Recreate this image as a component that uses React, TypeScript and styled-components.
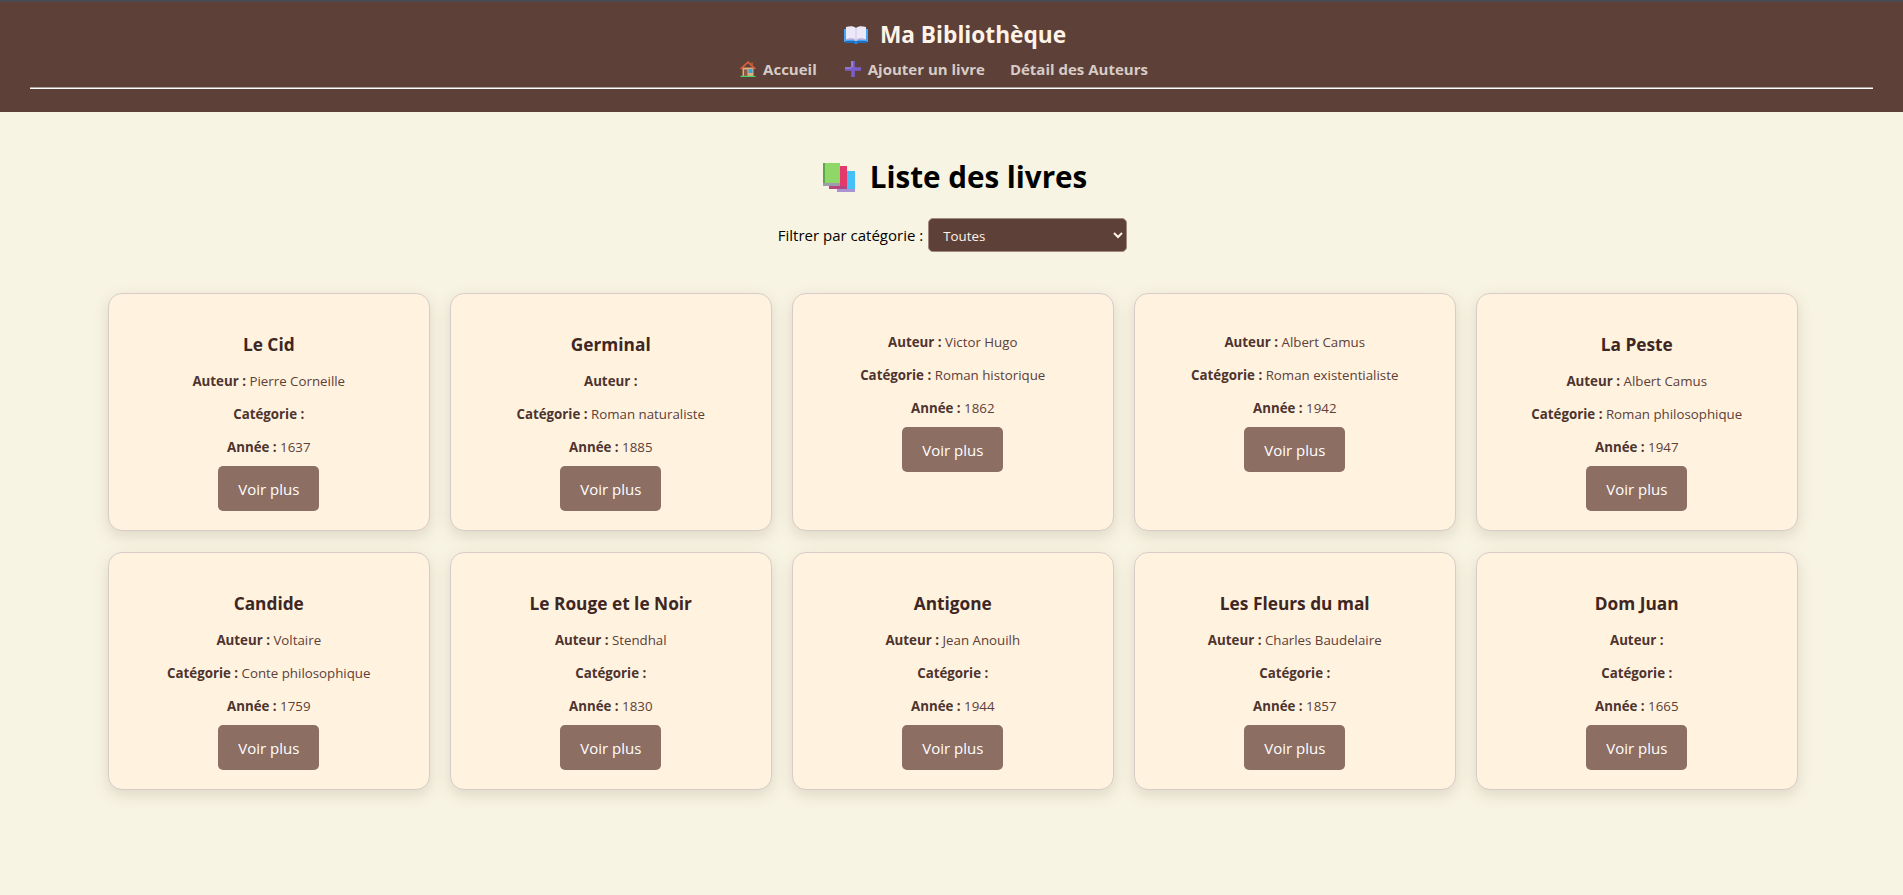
import React from "react";
import styled, { createGlobalStyle } from "styled-components";

const GlobalStyle = createGlobalStyle`
  * { box-sizing: border-box; }
  body {
    margin: 0;
    min-height: 100vh;
    background: #f8f4e3;
    font-family: "Open Sans", "Noto Sans", sans-serif;
    color: #000;
  }
`;

const Header = styled.header`
  height: 112px;
  background: #5d4037;
  border-top: 2px solid #4b4a52;
  padding: 16px 30px 0;
  text-align: center;
`;

const SiteTitle = styled.h1`
  margin: 0;
  padding-left: 7px;
  height: 33px;
  font-size: 22.7px;
  line-height: 33px;
  font-weight: 700;
  color: #fff3e8;
  display: flex;
  justify-content: center;
  align-items: center;
  gap: 12px;
`;

const Nav = styled.nav`
  margin-top: 4px;
  padding-right: 15px;
  height: 28px;
  display: flex;
  justify-content: center;
  align-items: center;
  gap: 25px;
`;

const NavLink = styled.a`
  display: flex;
  align-items: center;
  gap: 7px;
  font-size: 15px;
  font-weight: 700;
  color: #d7ccc8;
  text-decoration: none;
`;

const Rule = styled.hr`
  margin: 4px 0 0;
  height: 2px;
  border: 0;
  border-top: 1px solid #a99f9b;
  border-bottom: 1px solid #fff;
`;

const Main = styled.main`
  padding: 43px 0 70px;
`;

const PageTitle = styled.h2`
  margin: 0;
  padding-left: 7px;
  height: 44px;
  font-size: 29.6px;
  line-height: 44px;
  font-weight: 700;
  display: flex;
  justify-content: center;
  align-items: center;
  gap: 15px;
`;

const FilterRow = styled.div`
  margin-top: 19px;
  padding-left: 2px;
  display: flex;
  justify-content: center;
  align-items: center;
  gap: 5px;
  font-size: 15px;
`;

const FilterSelect = styled.select`
  width: 199px;
  height: 34px;
  padding: 1px 10px 0;
  border: 1px solid #a1887f;
  border-radius: 5px;
  background: #5d4037;
  color: #fff3e8;
  font-family: inherit;
  font-size: 13.3px;
`;

const Grid = styled.section`
  margin: 41px 105px 0 108px;
  display: grid;
  grid-template-columns: repeat(5, 321.5px);
  grid-auto-rows: 238px;
  gap: 21px 20.5px;
`;

const Card = styled.article`
  display: flex;
  flex-direction: column;
  align-items: center;
  padding: 39px 16px 19px;
  background: #fff3e0;
  border: 1px solid #d7ccc8;
  border-radius: 14px;
  box-shadow: 0 5px 15px rgba(93, 64, 55, 0.16);
  text-align: center;
`;

const BookTitle = styled.h3`
  margin: 0 0 15px;
  height: 24px;
  font-size: 17.3px;
  line-height: 24px;
  font-weight: 700;
  color: #3e2723;
`;

const Meta = styled.p`
  margin: 0 0 14px;
  height: 19px;
  font-size: 13.3px;
  line-height: 19px;
  color: #5d4037;

  &:last-of-type {
    margin-bottom: 9px;
  }

  strong {
    color: #4e342e;
  }
`;

const MoreButton = styled.button`
  width: 101px;
  height: 45px;
  border: 0;
  border-radius: 5px;
  background: #8d6e63;
  color: #fff;
  font-family: inherit;
  font-size: 15px;
`;

const OpenBook = () => (
  <svg width="24" height="18" viewBox="0 0 24 18">
    <path d="M0 3h24v13H0z" fill="#42a5f5" />
    <path d="M1 15h22v2H1z" fill="#1e6fc4" />
    <path d="M2 1c4-1 8-1 10 1 2-2 6-2 10-1v13c-4-1-8-1-10 1-2-2-6-2-10-1z" fill="#ece8f8" />
    <path d="M2 13c4-1 8-1 10 1 2-2 6-2 10-1v1.500c-4-1-8-1-10 1-2-2-6-2-10-1z" fill="#b7aedd" />
    <path d="M12 2v13" stroke="#cfc8ea" strokeWidth="1" />
    <path d="M10.500 16h3v2h-3z" fill="#1e88e5" />
  </svg>
);

const House = () => (
  <svg width="16" height="16" viewBox="0 0 16 16">
    <path d="M2.500 6.500h11V15h-11z" fill="#e3ab7c" />
    <path d="M0 7.500 8 0l8 7.500-1.200 1L8 2.300 1.200 8.500z" fill="#e0603a" />
    <path d="M11 1.500h2v3.500l-2-1.800z" fill="#b5553a" />
    <path d="M8.500 8h4v4h-4z" fill="#35a7dc" />
    <path d="M4 8.500h3.500V15H4z" fill="#8a5a44" />
    <path d="M0.500 14.800h15V16H.5z" fill="#49d36b" />
  </svg>
);

const Plus = () => (
  <svg width="19" height="16" viewBox="-3 0 19 16">
    <path d="M6.200 0h3.600v16H6.200z M0 6.200h16v3.600H0z" fill="#7a5dc8" />
    <path d="M6.200 0h1.600v6.200H6.200z M0 6.200h6.200v1.400H0z" fill="#9c86dc" />
  </svg>
);

const Books = () => (
  <svg width="32" height="29" viewBox="0 0 32 29">
    <path d="M14 8h18v19H14z" fill="#45c0f6" />
    <path d="M14 8h2v19h-2z" fill="#2a8fd6" />
    <path d="M14 26h18v3H14z" fill="#a993d4" />
    <path d="M6 3h18v21H6z" fill="#e5396b" />
    <path d="M6 23h18v3H6z" fill="#b5467f" />
    <path d="M0 0h17v20H0z" fill="#8fd766" />
    <path d="M0 0h2v20H0z" fill="#5aa84a" />
    <path d="M0 20h17v3H0z" fill="#9c9cab" />
  </svg>
);

const books = [
  { title: "Le Cid", author: "Pierre Corneille", category: "", year: 1637 },
  { title: "Germinal", author: "", category: "Roman naturaliste", year: 1885 },
  { title: "", author: "Victor Hugo", category: "Roman historique", year: 1862 },
  { title: "", author: "Albert Camus", category: "Roman existentialiste", year: 1942 },
  { title: "La Peste", author: "Albert Camus", category: "Roman philosophique", year: 1947 },
  { title: "Candide", author: "Voltaire", category: "Conte philosophique", year: 1759 },
  { title: "Le Rouge et le Noir", author: "Stendhal", category: "", year: 1830 },
  { title: "Antigone", author: "Jean Anouilh", category: "", year: 1944 },
  { title: "Les Fleurs du mal", author: "Charles Baudelaire", category: "", year: 1857 },
  { title: "Dom Juan", author: "", category: "", year: 1665 },
];

const App = () => (
  <>
    <GlobalStyle />
    <Header>
      <SiteTitle>
        <OpenBook />
        Ma Bibliothèque
      </SiteTitle>
      <Nav>
        <NavLink href="#">
          <House />
          Accueil
        </NavLink>
        <NavLink href="#">
          <Plus />
          Ajouter un livre
        </NavLink>
        <NavLink href="#">Détail des Auteurs</NavLink>
      </Nav>
      <Rule />
    </Header>
    <Main>
      <PageTitle>
        <Books />
        Liste des livres
      </PageTitle>
      <FilterRow>
        <label htmlFor="categorie">Filtrer par catégorie :</label>
        <FilterSelect id="categorie">
          <option>Toutes</option>
        </FilterSelect>
      </FilterRow>
      <Grid>
        {books.map((book) => (
          <Card key={book.year}>
            {book.title && <BookTitle>{book.title}</BookTitle>}
            <Meta>
              <strong>Auteur :</strong> {book.author}
            </Meta>
            <Meta>
              <strong>Catégorie :</strong> {book.category}
            </Meta>
            <Meta>
              <strong>Année :</strong> {book.year}
            </Meta>
            <MoreButton>Voir plus</MoreButton>
          </Card>
        ))}
      </Grid>
    </Main>
  </>
);

export default App;
